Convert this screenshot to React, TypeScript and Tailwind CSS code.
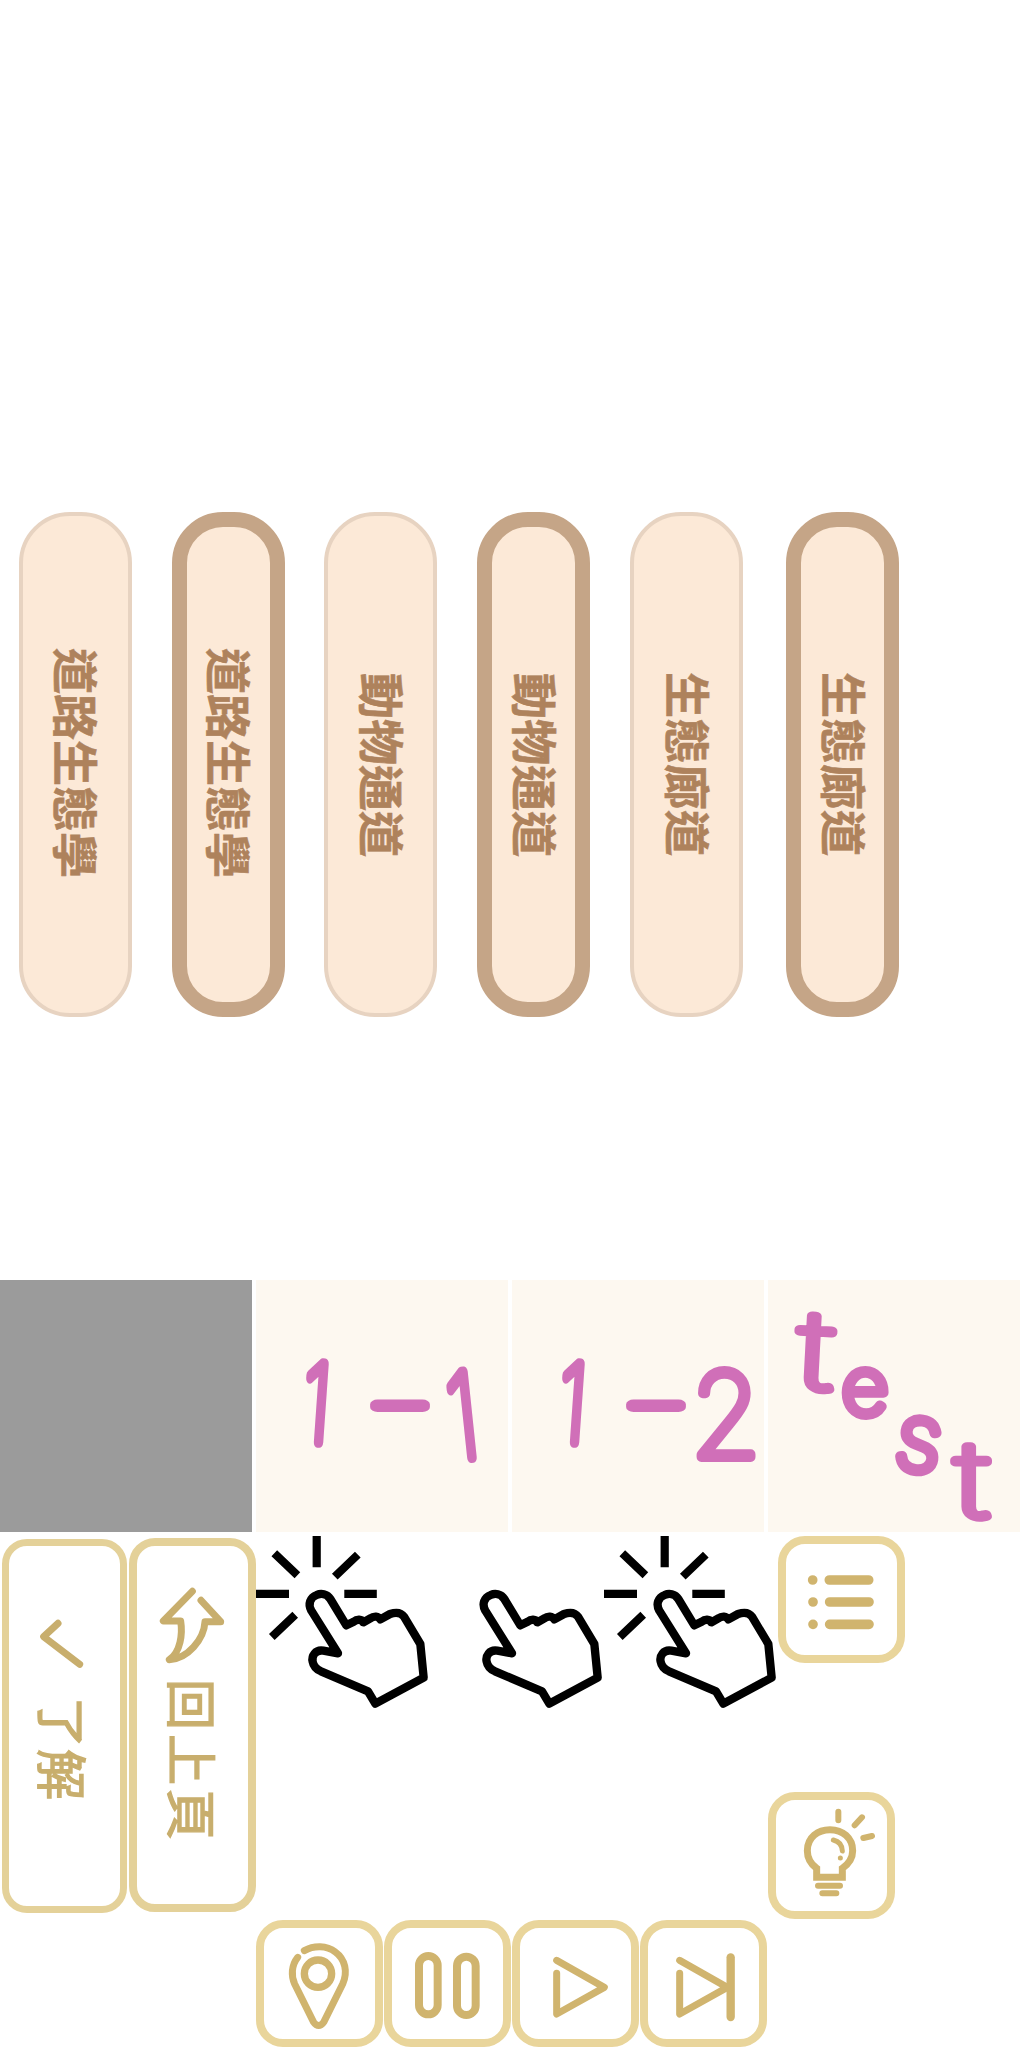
import type { ReactNode } from "react";

type Pill = { label: string; active: boolean; box: string; text: string };

const pills: Pill[] = [
  { label: "道路生態學", active: false, box: "ml-[19px]", text: "translate-x-[2px] -translate-y-[2px]" },
  { label: "道路生態學", active: true, box: "ml-[40px]", text: "translate-x-[2px] -translate-y-[2px]" },
  { label: "動物通道", active: false, box: "ml-[39px]", text: "translate-x-[3px]" },
  { label: "動物通道", active: true, box: "ml-[40px]", text: "translate-x-[3px]" },
  { label: "生態廊道", active: false, box: "ml-[40px]", text: "translate-x-[3px] -translate-y-[1px]" },
  { label: "生態廊道", active: true, box: "ml-[43px]", text: "translate-x-[3px] -translate-y-[1px]" },
];

function TopicPill({ label, active, box, text }: Pill) {
  return (
    <button
      className={`flex h-[505px] w-[113px] shrink-0 items-center justify-center rounded-[51px] bg-[#fce9d7] ${
        active ? "border-[15px] border-[#c5a587]" : "border-4 border-[#e7d3c1]"
      } ${box}`}
    >
      <span
        className={`text-[46px] leading-[46px] font-bold whitespace-nowrap text-[#ae825c] [-webkit-text-stroke:0.6px_#ae825c] [text-orientation:sideways] [writing-mode:vertical-rl] ${text}`}
      >
        {label}
      </span>
    </button>
  );
}

type Ink = { ch: string; t: string; size: number; pen?: number };

function Note({ inks }: { inks: Ink[] }) {
  return (
    <div className="h-[252px] w-[252px] shrink-0 bg-[#fdf8f0]">
      <svg
        viewBox="0 0 252 252"
        className="h-[252px] w-[252px] overflow-visible fill-[#d06fb8] stroke-[#d06fb8] font-['Inter'] font-thin"
        strokeLinejoin="round"
        strokeLinecap="round"
        textAnchor="middle"
      >
        {inks.map((ink, i) => (
          <text key={i} transform={ink.t} fontSize={ink.size} strokeWidth={ink.pen ?? 10}>
            {ink.ch}
          </text>
        ))}
      </svg>
    </div>
  );
}

const oneOne: Ink[] = [
  { ch: "1", t: "translate(58 162) rotate(4) scale(.7 1)", size: 108, pen: 11 },
  { ch: "-", t: "translate(144 160) scale(1.5 1)", size: 110 },
  { ch: "1", t: "translate(211 178) rotate(-6) scale(.7 1)", size: 118, pen: 11 },
];
const oneTwo: Ink[] = [
  { ch: "1", t: "translate(58 162) rotate(4) scale(.7 1)", size: 108, pen: 11 },
  { ch: "-", t: "translate(144 160) scale(1.5 1)", size: 110 },
  { ch: "2", t: "translate(214 177) scale(.96 1)", size: 117 },
];
const test: Ink[] = [
  { ch: "t", t: "translate(46 109) rotate(3) scale(1.35 1)", size: 108, pen: 8.5 },
  { ch: "e", t: "translate(97 134) scale(1.04 1)", size: 78 },
  { ch: "s", t: "translate(147 190) rotate(8)", size: 92 },
  { ch: "t", t: "translate(204 237) scale(1.35 1)", size: 104, pen: 8.5 },
];

function Hand({ rays }: { rays?: boolean }) {
  return (
    <svg viewBox="0 0 174 176" className="h-[176px] w-[174px] shrink-0 fill-none stroke-black">
      {rays && (
        <path
          strokeWidth="8.2"
          d="M60.7 0V31.3M0 57.8H33M88.3 57.8H120.8M18.3 17.3L41.4 39.2M101.8 18.6L78.8 40.6M39.2 78.8L15.8 100.9"
        />
      )}
      <path
        transform="translate(-6 -6) scale(.33333)"
        strokeWidth="25"
        strokeLinejoin="round"
        d="M289 286L241 207C231 191 213 189 200 195C180 203 173 222 184 242L264 370L220 362C196 358 184 378 188 395C191 411 200 418 213 424L354 484L376 521L521 443L511 342L462 260C452 246 435 247 420 252L391 268C385 258 372 257 361 265L340 277C335 267 321 267 311 275Z"
      />
    </svg>
  );
}

function IconButton({ viewBox, className = "", children }: { viewBox: string; className?: string; children: ReactNode }) {
  return (
    <button className={`h-[127px] w-[127px] shrink-0 rounded-[27px] border-8 border-[#e9d59b] bg-white ${className}`}>
      <svg
        viewBox={viewBox}
        className="h-[111px] w-[111px] fill-none stroke-[#d0b46e]"
        strokeWidth="20"
        strokeLinecap="round"
        strokeLinejoin="round"
      >
        {children}
      </svg>
    </button>
  );
}

function TallButton({
  label,
  viewBox,
  box,
  text,
  children,
}: {
  label: string;
  viewBox: string;
  box: string;
  text: string;
  children: ReactNode;
}) {
  return (
    <button className={`flex h-[374px] shrink-0 flex-col items-center border-[#e4d199] bg-white ${box}`}>
      <svg
        viewBox={viewBox}
        className="h-[128px] w-[111px] shrink-0 fill-none stroke-[#c8ae6d]"
        strokeWidth="21"
        strokeLinecap="round"
        strokeLinejoin="round"
      >
        {children}
      </svg>
      <span
        className={`whitespace-nowrap text-[#c8ae6d] [text-orientation:sideways] [-webkit-text-stroke:1.4px_#c8ae6d] [writing-mode:vertical-rl] ${text}`}
      >
        {label}
      </span>
    </button>
  );
}

export default function App() {
  return (
    <main className="h-[2048px] w-[1024px] overflow-hidden bg-white font-['Noto_Sans_CJK_TC',sans-serif]">
      <section className="flex h-[1280px] items-start pt-[512px]">
        {pills.map((p, i) => (
          <TopicPill key={i} {...p} />
        ))}
      </section>

      <section className="flex h-[256px] gap-1">
        <div className="h-[252px] w-[252px] shrink-0 bg-[#9b9b9b]" />
        <Note inks={oneOne} />
        <Note inks={oneTwo} />
        <Note inks={test} />
      </section>

      <section className="flex h-[512px]">
        <div className="flex w-[256px] shrink-0 items-start">
          <TallButton
            label="了解"
            viewBox="27 49 333 384"
            box="mt-[3px] ml-[2px] w-[125px] rounded-[25px] border-[7px]"
            text="mt-[23px] text-[51px] leading-[52px] tracking-[1px] -translate-x-[1px]"
          >
            <path d="M174 281L131 321L239 404" />
          </TallButton>
          <TallButton
            label="回上頁"
            viewBox="411 47 333 384"
            box="mt-[2px] ml-[2px] w-[127px] rounded-[26px] border-8"
            text="mt-[5px] translate-x-[1px] text-[51px] leading-[52px] tracking-[4px]"
          >
            <path
              d="M577 183L490 272L542 272C548 310 542 365 508 388C562 386 612 328 615 274L662 274L603 210"
            />
          </TallButton>
        </div>

        <div className="flex w-[768px] flex-col">
          <div className="flex h-[256px] items-start">
            <Hand rays />
            <Hand />
            <Hand rays />
            <IconButton viewBox="78 42 333 333">
              <path strokeWidth="29" d="M158 150H158.1M159 216H159.1M159 283H159.1M208 150H326M209 216H327M209 283H327" />
            </IconButton>
          </div>

          <div className="flex h-[128px] justify-start pl-[512px]">
            <IconButton viewBox="48 60 333 333">
              <path
                strokeWidth="21"
                strokeLinejoin="miter"
                d="M170 292V265C150 250 142 232 142 212C142 172 174 149 210 149C248 149 278 174 278 212C278 234 268 250 247 265V292Z"
              />
              <path strokeWidth="18" d="M174 317H240M187 340H229M235 95V121M306 112L284 136M310 174L336 168" />
              <path strokeWidth="15" d="M220 180Q246 186 247 213M241 234H241.1" />
            </IconButton>
          </div>

          <div className="flex h-[128px] gap-px">
            <IconButton viewBox="42 54 333 333">
              <path
                strokeWidth="21"
                d="M143 142C124 166 123 198 134 222L190 335Q206 358 222 335L278 222C294 186 286 148 256 126C230 106 192 106 163 122"
              />
              <circle cx="204" cy="191" r="41" strokeWidth="22" />
            </IconButton>
            <IconButton viewBox="426 54 333 333">
              <rect x="507" y="138" width="56" height="175" rx="28" strokeWidth="24" />
              <rect x="621" y="140" width="56" height="175" rx="28" strokeWidth="24" />
            </IconButton>
            <IconButton viewBox="45 54 333 333">
              <path strokeWidth="21" d="M155 151L298 232L155 312V190" />
            </IconButton>
            <IconButton viewBox="429 54 333 333">
              <path strokeWidth="21" d="M524 151L667 232L524 312V190" />
              <path strokeWidth="25" d="M677 142V321" />
            </IconButton>
          </div>
        </div>
      </section>
    </main>
  );
}
